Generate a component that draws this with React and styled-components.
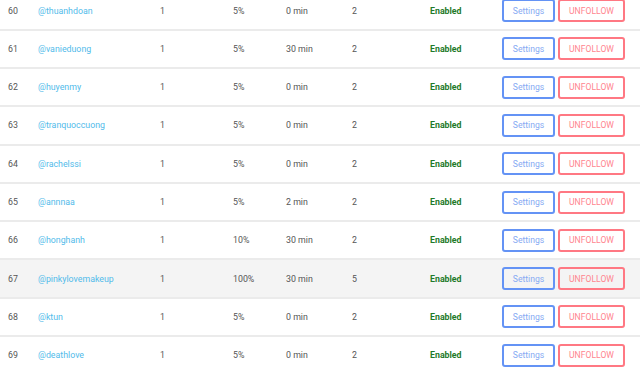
import React from "react";
import styled, { createGlobalStyle } from "styled-components";

const rows = [
  { id: 60, user: "thuanhdoan", count: 1, rate: "5%", delay: "0 min", level: 2 },
  { id: 61, user: "vanieduong", count: 1, rate: "5%", delay: "30 min", level: 2 },
  { id: 62, user: "huyenmy", count: 1, rate: "5%", delay: "0 min", level: 2 },
  { id: 63, user: "tranquoccuong", count: 1, rate: "5%", delay: "0 min", level: 2 },
  { id: 64, user: "rachelssi", count: 1, rate: "5%", delay: "0 min", level: 2 },
  { id: 65, user: "annnaa", count: 1, rate: "5%", delay: "2 min", level: 2 },
  { id: 66, user: "honghanh", count: 1, rate: "10%", delay: "30 min", level: 2 },
  { id: 67, user: "pinkylovemakeup", count: 1, rate: "100%", delay: "30 min", level: 5, active: true },
  { id: 68, user: "ktun", count: 1, rate: "5%", delay: "0 min", level: 2 },
  { id: 69, user: "deathlove", count: 1, rate: "5%", delay: "0 min", level: 2 },
];

const App = () => {
  return (
    <>
      <GlobalStyle />
      <Table>
        {rows.map((row) => (
          <Row key={row.id} $active={row.active}>
            <Cell>{row.id}</Cell>
            <UserLink>@{row.user}</UserLink>
            <Cell>{row.count}</Cell>
            <Cell>{row.rate}</Cell>
            <Cell>{row.delay}</Cell>
            <Cell>{row.level}</Cell>
            <Status>Enabled</Status>
            <Actions>
              <OutlineButton $color="#6493f5" $text="#86aaf3" $width={53}>
                Settings
              </OutlineButton>
              <OutlineButton $color="#ff7883" $text="#ff858f" $width={67}>
                UNFOLLOW
              </OutlineButton>
            </Actions>
          </Row>
        ))}
      </Table>
    </>
  );
};

const GlobalStyle = createGlobalStyle`
  html, body {
    margin: 0;
    padding: 0;
    background: #ffffff;
    overflow: hidden;
  }
  body {
    font-family: Roboto, "Liberation Sans", sans-serif;
  }
`;

const Table = styled.div`
  display: flex;
  flex-direction: column;
  margin-top: -9.6px;
  width: 640px;
`;

const Row = styled.div`
  box-sizing: border-box;
  height: 38.3px;
  display: grid;
  grid-template-columns: 30px 122px 73px 53px 66px 78px 72px 1fr;
  align-items: center;
  padding-left: 8px;
  border-top: 2px solid #ebebeb;
  background-color: ${({ $active }) => ($active ? "#f4f4f4" : "#ffffff")};
  font-size: 8.8px;
`;

const Cell = styled.div`
  color: #555555;
  white-space: nowrap;
`;

const UserLink = styled.a`
  color: #52bbea;
  text-decoration: none;
  white-space: nowrap;
`;

const Status = styled.div`
  color: #1f7a2a;
  font-weight: 700;
`;

const Actions = styled.div`
  display: flex;
  gap: 3px;
`;

const OutlineButton = styled.button`
  box-sizing: border-box;
  width: ${({ $width }) => $width}px;
  height: 23px;
  padding: 0;
  background: transparent;
  border: 2px solid ${({ $color }) => $color};
  border-radius: 3px;
  color: ${({ $text }) => $text};
  font-family: Roboto, "Liberation Sans", sans-serif;
  font-size: 8.6px;
  cursor: pointer;
`;

export default App;
